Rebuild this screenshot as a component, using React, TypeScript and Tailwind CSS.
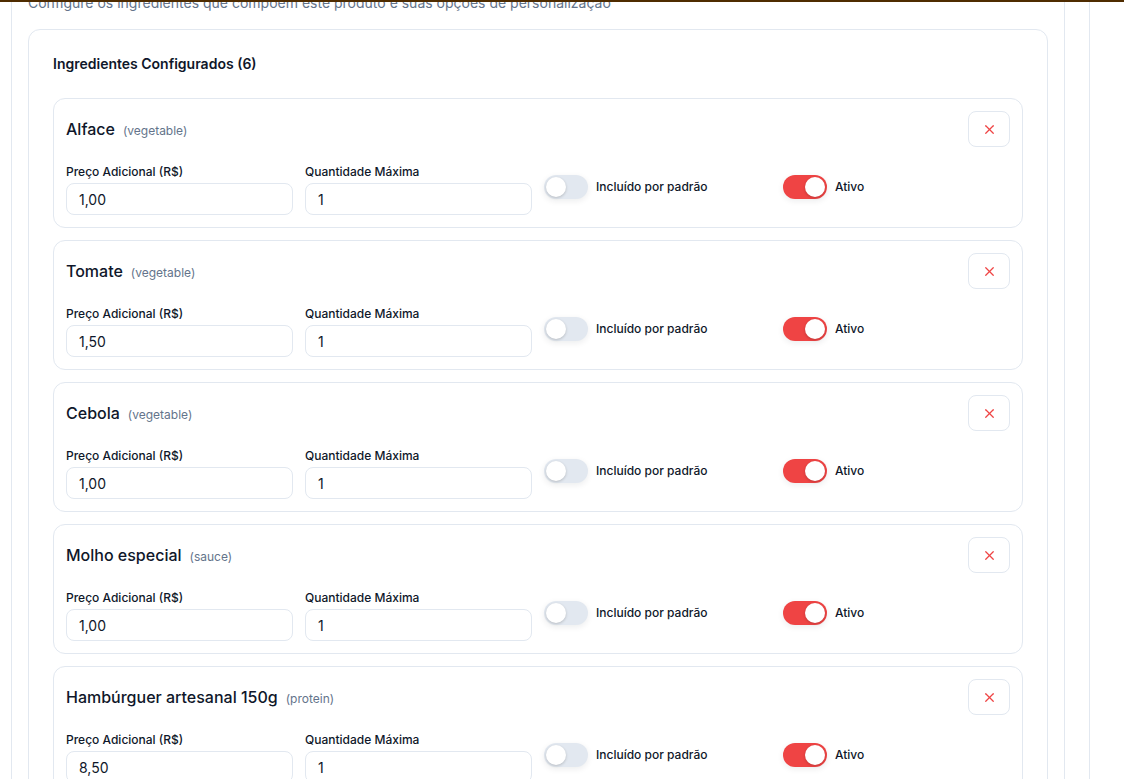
import React from 'react';
import { X } from 'lucide-react';

interface Ingredient {
  name: string;
  type: string;
  price: string;
  maxQty: string;
  included: boolean;
  active: boolean;
}

const ingredients: Ingredient[] = [
  { name: 'Alface', type: 'vegetable', price: '1,00', maxQty: '1', included: false, active: true },
  { name: 'Tomate', type: 'vegetable', price: '1,50', maxQty: '1', included: false, active: true },
  { name: 'Cebola', type: 'vegetable', price: '1,00', maxQty: '1', included: false, active: true },
  { name: 'Molho especial', type: 'sauce', price: '1,00', maxQty: '1', included: false, active: true },
  { name: 'Hambúrguer artesanal 150g', type: 'protein', price: '8,50', maxQty: '1', included: false, active: true },
  { name: 'Queijo cheddar', type: 'dairy', price: '3,00', maxQty: '2', included: false, active: true },
];

const Toggle: React.FC<{ on: boolean }> = ({ on }) => (
  <span
    className={`flex h-6 w-11 shrink-0 items-center rounded-full p-[2px] shadow-[0_2px_6px_rgba(15,23,42,0.08)] ${
      on ? 'justify-end bg-[#ef4444]' : 'justify-start bg-[#e2e8f0]'
    }`}
  >
    <span className="h-5 w-5 rounded-full bg-white shadow-[0_1px_3px_rgba(0,0,0,0.2)]" />
  </span>
);

const IngredientRow: React.FC<{ item: Ingredient }> = ({ item }) => (
  <div className="rounded-xl border border-[#e2e8f0] bg-white p-3">
    <div className="mb-[17px] flex items-center justify-between">
      <div className="flex items-baseline gap-2">
        <span className="text-base font-medium text-[#0f172a]">{item.name}</span>
        <span className="text-xs text-[#64748b]">({item.type})</span>
      </div>
      <button className="flex h-9 w-[42px] items-center justify-center rounded-lg border border-[#e2e8f0] bg-white text-[#ef4444]">
        <X size={15} strokeWidth={2} />
      </button>
    </div>
    <div className="grid grid-cols-4 gap-3">
      <div>
        <label className="mb-[3px] block text-xs font-medium text-[#0f172a]">Preço Adicional (R$)</label>
        <div className="flex h-8 items-center rounded-lg border border-[#e2e8f0] px-3 pt-[2px] text-sm text-[#0f172a]">
          {item.price}
        </div>
      </div>
      <div>
        <label className="mb-[3px] block text-xs font-medium text-[#0f172a]">Quantidade Máxima</label>
        <div className="flex h-8 items-center rounded-lg border border-[#e2e8f0] px-3 pt-[2px] text-sm text-[#0f172a]">
          {item.maxQty}
        </div>
      </div>
      <div className="mt-[11px] flex items-center gap-2 self-start">
        <Toggle on={item.included} />
        <span className="text-xs font-medium text-[#0f172a]">Incluído por padrão</span>
      </div>
      <div className="mt-[11px] flex items-center gap-2 self-start">
        <Toggle on={item.active} />
        <span className="text-xs font-medium text-[#0f172a]">Ativo</span>
      </div>
    </div>
  </div>
);

export default function App() {
  return (
    <div className="relative h-[779px] w-full overflow-hidden bg-white font-['Inter',sans-serif]">
      <div className="absolute left-0 right-0 top-0 z-10 h-[2px] bg-[#4f2c00]" />
      <div className="flex h-full">
        <div className="ml-[11px] h-full w-[1054px] shrink-0 border-x border-[#e2e8f0] px-4">
          <p className="-mt-[7px] mb-4 text-sm leading-5 text-[#64748b]">
            Configure os ingredientes que compõem este produto e suas opções de personalização
          </p>
          <div className="rounded-xl border border-[#e2e8f0] p-6">
            <h3 className="mb-6 text-sm font-semibold text-[#0f172a]">Ingredientes Configurados ({ingredients.length})</h3>
            <div className="flex flex-col gap-3">
              {ingredients.map((item) => (
                <IngredientRow key={item.name} item={item} />
              ))}
            </div>
          </div>
        </div>
        <div className="ml-6 h-full flex-1 border-l border-[#e2e8f0]" />
      </div>
    </div>
  );
}
